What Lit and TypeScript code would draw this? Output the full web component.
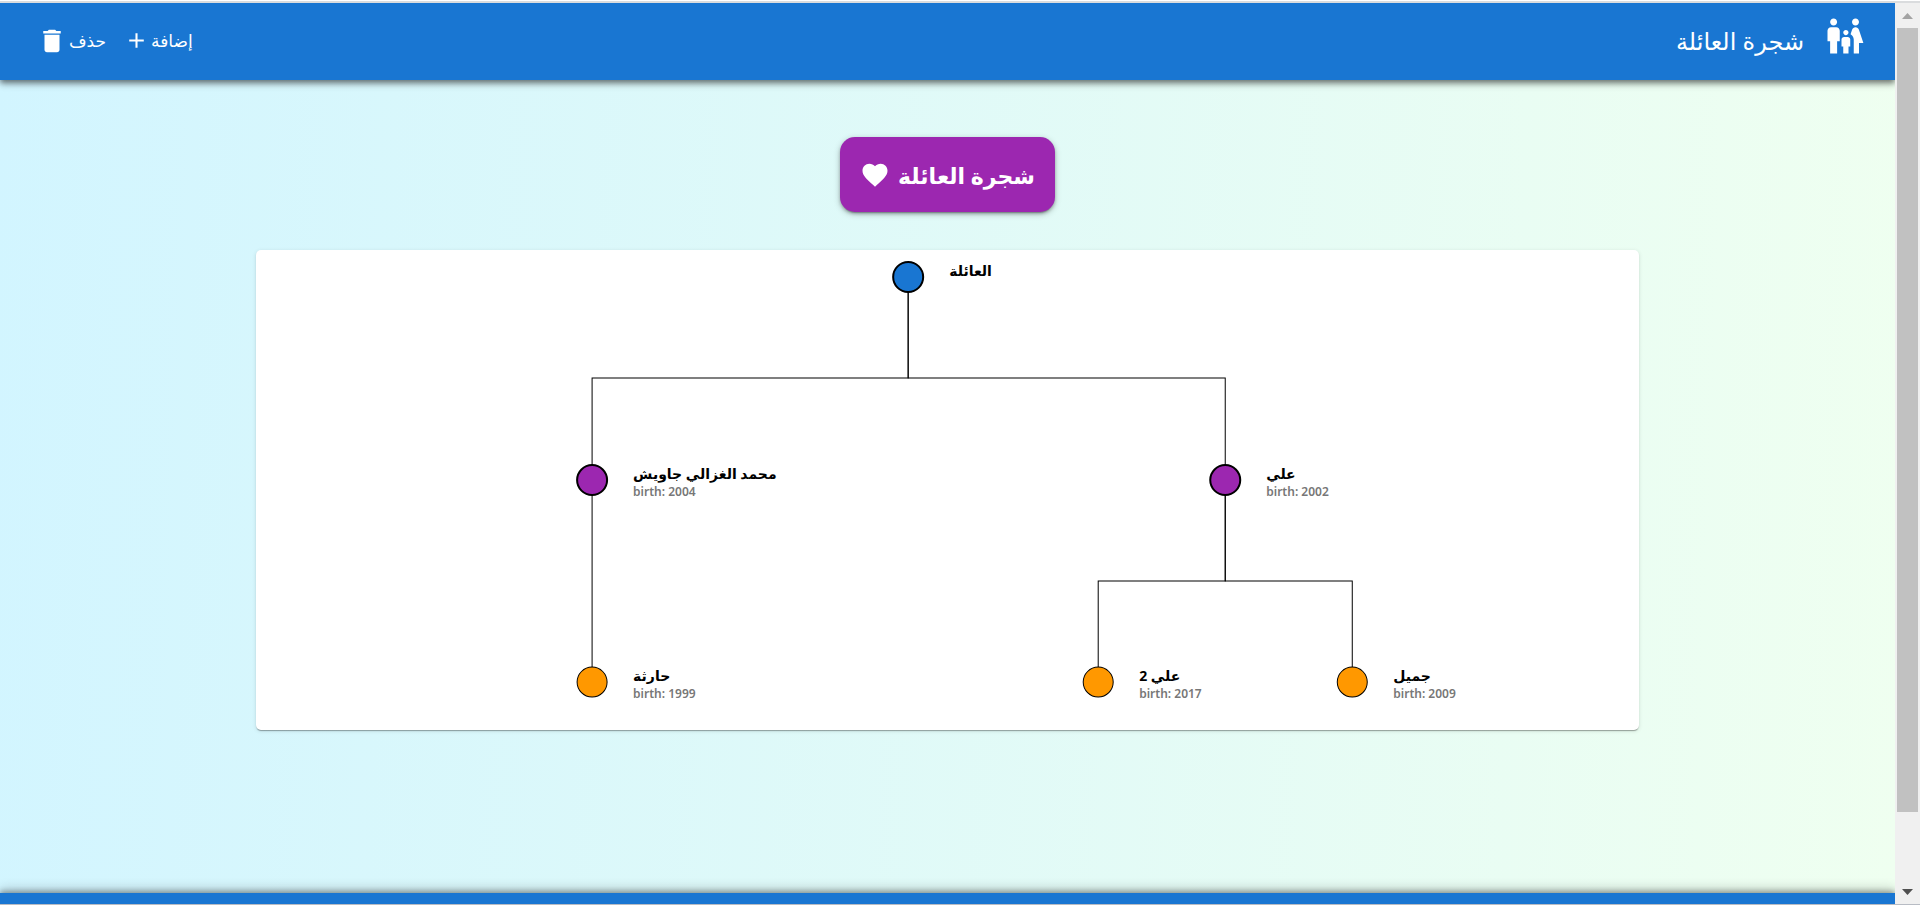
import { LitElement, html, svg, css } from "lit";
import { customElement } from "lit/decorators.js";

interface Member {
  x: number;
  y: number;
  name: string;
  birth?: number;
  kind: "root" | "branch" | "leaf";
}

const MEMBERS: Member[] = [
  { x: 652, y: 27, name: "العائلة", kind: "root" },
  { x: 336, y: 230, name: "محمد الغزالي جاويش", birth: 2004, kind: "branch" },
  { x: 969, y: 230, name: "علي", birth: 2002, kind: "branch" },
  { x: 336, y: 432, name: "حارثة", birth: 1999, kind: "leaf" },
  { x: 842, y: 432, name: "علي 2", birth: 2017, kind: "leaf" },
  { x: 1096, y: 432, name: "جميل", birth: 2009, kind: "leaf" },
];

const LINKS: [number, number][] = [
  [0, 1],
  [0, 2],
  [1, 3],
  [2, 4],
  [2, 5],
];

const FAMILY =
  "M16 4c0-1.11.89-2 2-2s2 .89 2 2-.89 2-2 2-2-.89-2-2zm4 18v-6h2.5l-2.54-7.63C19.68 7.55 18.92 7 18.06 7h-.12c-.86 0-1.63.55-1.9 1.37l-.86 2.58c1.08.6 1.82 1.73 1.82 3.05v8h3zm-7.5-10.5c.83 0 1.5-.67 1.5-1.5s-.67-1.5-1.5-1.5S11 9.17 11 10s.67 1.5 1.5 1.5zM5.5 6c1.11 0 2-.89 2-2s-.89-2-2-2-2 .89-2 2 .89 2 2 2zm2 16v-7H9V9c0-1.1-.9-2-2-2H4c-1.1 0-2 .9-2 2v6h1.5v7h4zm6.5 0v-4h1v-4c0-.82-.68-1.5-1.5-1.5h-2c-.82 0-1.5.68-1.5 1.5v4h1v4h3z";
const ADD = "M19 13h-6v6h-2v-6H5v-2h6V5h2v6h6v2z";
const TRASH = "M6 19c0 1.1.9 2 2 2h8c1.1 0 2-.9 2-2V7H6v12zM19 4h-3.5l-1-1h-5l-1 1H5v2h14V4z";
const HEART =
  "m12 21.35-1.45-1.32C5.4 15.36 2 12.28 2 8.5 2 5.42 4.42 3 7.5 3c1.74 0 3.41.81 4.5 2.09C13.09 3.81 14.76 3 16.5 3 19.58 3 22 5.42 22 8.5c0 3.78-3.4 6.86-8.55 11.54L12 21.35z";

const icon = (path: string, cls: string) => html`
  <svg class="icon ${cls}" viewBox="0 0 24 24" aria-hidden="true"><path d=${path}></path></svg>
`;

@customElement("family-tree")
export class FamilyTree extends LitElement {
  static styles = css`
    :host {
      display: block;
      direction: ltr;
      background: #fff;
      border-radius: 5px;
      box-shadow: 0 2px 1px -1px rgba(0, 0, 0, 0.2), 0 1px 1px rgba(0, 0, 0, 0.14),
        0 1px 4px rgba(0, 0, 0, 0.12);
    }
    svg {
      display: block;
      width: 100%;
    }
    .link {
      fill: none;
      stroke: #000;
    }
    circle {
      stroke: #000;
      stroke-width: 2px;
    }
    .root {
      fill: #1976d2;
    }
    .branch {
      fill: #9c27b0;
    }
    .leaf {
      fill: #ff9800;
      stroke-width: 1px;
    }
    .name {
      font-size: 14px;
      font-weight: 700;
      fill: #000;
    }
    .birth {
      font-size: 12px;
      font-weight: 600;
      fill: #777;
    }
  `;

  render() {
    return html`
      <svg viewBox="0 0 1383 480" role="img" aria-label="شجرة العائلة">
        ${LINKS.map(([a, b]) => {
          const from = MEMBERS[a];
          const to = MEMBERS[b];
          const mid = Math.floor((from.y + to.y) / 2);
          return svg`<path class="link" d="M${from.x} ${from.y}V${mid}H${to.x}V${to.y}"></path>`;
        })}
        ${MEMBERS.map(
          (m) => svg`
            <circle class=${m.kind} cx=${m.x} cy=${m.y} r="15"></circle>
            <text class="name" x=${m.x + 41} y=${m.y - 1}>${m.name}</text>
            ${m.birth ? svg`<text class="birth" x=${m.x + 41} y=${m.y + 16}>birth: ${m.birth}</text>` : ""}
          `
        )}
      </svg>
    `;
  }
}

@customElement("app-root")
export class AppRoot extends LitElement {
  static styles = css`
    :host {
      display: flex;
      flex-direction: column;
      height: 100vh;
      box-sizing: border-box;
      border-top: 1px solid #fff;
      border-bottom: 1px solid #b8bcc4;
      font-family: "Noto Sans", "DejaVu Sans", sans-serif;
    }
    .edge {
      height: 2px;
      background: #dadcde;
    }
    .window {
      flex: 1;
      min-height: 0;
      display: flex;
    }
    .page {
      flex: 1;
      min-width: 0;
      overflow: hidden;
      direction: rtl;
      display: flex;
      flex-direction: column;
      background: linear-gradient(92deg, #d2f5ff, #effff0);
    }
    header {
      height: 77px;
      box-sizing: border-box;
      padding: 0 29px 2px 37px;
      display: flex;
      align-items: center;
      justify-content: space-between;
      color: #fff;
      background: #1976d2;
      box-shadow: 0 3px 5px -1px rgba(0, 0, 0, 0.2), 0 5px 6px rgba(0, 0, 0, 0.14),
        0 1px 12px rgba(0, 0, 0, 0.12), 0 2px 6px rgba(0, 0, 0, 0.3);
    }
    .brand {
      display: flex;
      align-items: center;
      gap: 20px;
      font-size: 24px;
      line-height: 32px;
    }
    .actions {
      display: flex;
      gap: 18px;
    }
    button {
      display: flex;
      align-items: center;
      border: 0;
      padding: 0;
      color: inherit;
      background: none;
      font: inherit;
      cursor: pointer;
    }
    .action {
      gap: 2px;
      font-size: 17px;
      line-height: 30px;
    }
    .icon {
      display: block;
      fill: currentColor;
      flex: none;
    }
    .family {
      width: 42px;
      height: 42px;
      padding-bottom: 10px;
    }
    .add {
      width: 25px;
      height: 25px;
    }
    .trash,
    .heart {
      width: 30px;
      height: 30px;
    }
    main {
      flex: 1;
      padding-top: 57px;
      display: flex;
      flex-direction: column;
      align-items: center;
      gap: 38px;
    }
    .headline {
      height: 75px;
      padding: 0 20px;
      gap: 8px;
      border-radius: 15px;
      color: #fff;
      background: #9c27b0;
      font-size: 22px;
      font-weight: 700;
      box-shadow: 0 3px 1px -2px rgba(0, 0, 0, 0.2), 0 2px 3px rgba(0, 0, 0, 0.2),
        0 2px 6px rgba(0, 0, 0, 0.25);
    }
    family-tree {
      width: 73%;
    }
    footer {
      height: 11px;
      background: #1976d2;
      box-shadow: 0 -2px 5px rgba(0, 0, 0, 0.3), 0 -4px 12px rgba(0, 0, 0, 0.2);
    }
    .scroll {
      width: 25px;
      box-sizing: border-box;
      padding: 0 2px;
      background: #f0f0f0;
      display: flex;
      flex-direction: column;
      align-items: center;
    }
    .arrow {
      width: 11px;
      height: 6px;
      margin: 10px 0 9px;
      background: #a3a3a3;
      clip-path: polygon(50% 0, 100% 100%, 0 100%);
    }
    .arrow.down {
      margin: 9px 0;
      background: #505050;
      clip-path: polygon(0 0, 100% 0, 50% 100%);
    }
    .track {
      flex: 1;
      width: 100%;
    }
    .thumb {
      height: 92%;
      background: #c1c1c1;
    }
  `;

  render() {
    return html`
      <div class="edge"></div>
      <div class="window">
        <div class="page">
          <header>
            <div class="brand">${icon(FAMILY, "family")}<span>شجرة العائلة</span></div>
            <div class="actions">
              <button class="action"><span>إضافة</span>${icon(ADD, "add")}</button>
              <button class="action"><span>حذف</span>${icon(TRASH, "trash")}</button>
            </div>
          </header>
          <main>
            <button class="headline"><span>شجرة العائلة</span>${icon(HEART, "heart")}</button>
            <family-tree></family-tree>
          </main>
          <footer></footer>
        </div>
        <div class="scroll" aria-hidden="true">
          <div class="arrow"></div>
          <div class="track"><div class="thumb"></div></div>
          <div class="arrow down"></div>
        </div>
      </div>
    `;
  }
}
